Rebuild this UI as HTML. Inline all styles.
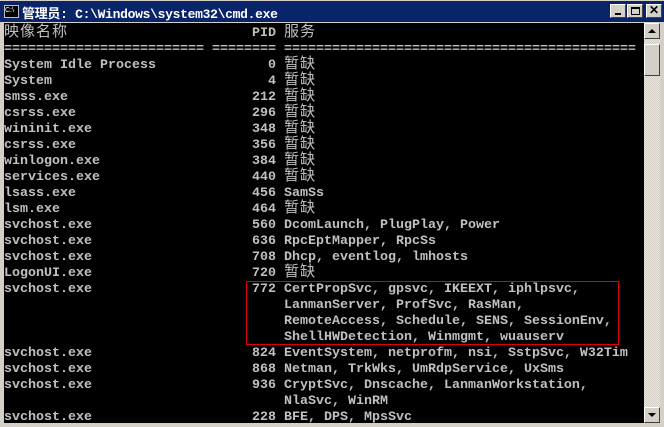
<!DOCTYPE html>
<html><head><meta charset="utf-8"><style>
*{margin:0;padding:0;box-sizing:border-box}
body{width:664px;height:427px;background:#d4d0c8;position:relative;overflow:hidden;font-family:"Liberation Mono","Noto Sans CJK SC",monospace}
#title{position:absolute;left:0;top:0;width:664px;height:22px;background:#0a246a;border-top:1px solid #d4d0c8}
#title .t{position:absolute;left:22px;top:2px;color:#fff;font-weight:bold;font-size:13px;font-family:"Liberation Mono","Noto Sans CJK SC",monospace;white-space:pre;letter-spacing:-0.3px}
#icon{position:absolute;left:4px;top:4px;width:15px;height:13px;background:#000;border:1px solid #c0c0c0;color:#fff;font-size:7px;line-height:10px;font-family:"Liberation Sans",sans-serif}
.btn{position:absolute;top:3px;width:16px;height:14px;background:#d4d0c8;border:1px solid;border-color:#fff #404040 #404040 #fff}
#con{position:absolute;left:4px;top:23px;width:640px;height:400px;background:#000;overflow:hidden}
#in{position:absolute;left:0;top:3px;width:640px;height:400px}
.r{position:absolute;left:0;height:16px;width:640px;color:#c0c0c0;font-size:13.33px;font-weight:bold;line-height:16px;white-space:pre}
.n{position:absolute;left:0}
.p{position:absolute;left:208px;width:64px;text-align:right}
.s{position:absolute;left:280px}
.c{font-weight:normal;font-size:15px;letter-spacing:1px;top:-1px}
#sb{position:absolute;left:644px;top:23px;width:16px;height:400px;background-color:#e8e6e2;background-image:linear-gradient(45deg,#d4d0c8 25%,transparent 25%,transparent 75%,#d4d0c8 75%),linear-gradient(45deg,#d4d0c8 25%,transparent 25%,transparent 75%,#d4d0c8 75%);background-size:2px 2px;background-position:0 0,1px 1px}
.sbtn{position:absolute;left:0;width:16px;height:16px;background:#d4d0c8;border:1px solid;border-color:#fff #404040 #404040 #fff}
#box{position:absolute;left:246px;top:281px;width:373px;height:64px;border:1px solid #e00000}
</style></head><body>
<div id="title"><div id="icon">C:\</div><div class="t">管理员: C:\Windows\system32\cmd.exe</div>
<div class="btn" style="left:610px"><div style="position:absolute;left:4px;top:8px;width:6px;height:2px;background:#000"></div></div>
<div class="btn" style="left:627px"><div style="position:absolute;left:3px;top:2px;width:9px;height:8px;border:1px solid #000;border-top-width:2px"></div></div>
<div class="btn" style="left:646px;font:bold 12px 'Liberation Sans',sans-serif;text-align:center;line-height:11px">✕</div>
</div>
<div id="con"><div id="in">
<div class="r" style="top:0"><span class="n c">映像名称</span><span class="p">PID</span><span class="s c">服务</span></div>
<div class="r" style="top:16px"><span class="n">=========================</span><span class="p">========</span><span class="s">============================================</span></div>
<div class="r" style="top:32px"><span class="n">System Idle Process</span><span class="p">0</span><span class="s c">暂缺</span></div>
<div class="r" style="top:48px"><span class="n">System</span><span class="p">4</span><span class="s c">暂缺</span></div>
<div class="r" style="top:64px"><span class="n">smss.exe</span><span class="p">212</span><span class="s c">暂缺</span></div>
<div class="r" style="top:80px"><span class="n">csrss.exe</span><span class="p">296</span><span class="s c">暂缺</span></div>
<div class="r" style="top:96px"><span class="n">wininit.exe</span><span class="p">348</span><span class="s c">暂缺</span></div>
<div class="r" style="top:112px"><span class="n">csrss.exe</span><span class="p">356</span><span class="s c">暂缺</span></div>
<div class="r" style="top:128px"><span class="n">winlogon.exe</span><span class="p">384</span><span class="s c">暂缺</span></div>
<div class="r" style="top:144px"><span class="n">services.exe</span><span class="p">440</span><span class="s c">暂缺</span></div>
<div class="r" style="top:160px"><span class="n">lsass.exe</span><span class="p">456</span><span class="s">SamSs</span></div>
<div class="r" style="top:176px"><span class="n">lsm.exe</span><span class="p">464</span><span class="s c">暂缺</span></div>
<div class="r" style="top:192px"><span class="n">svchost.exe</span><span class="p">560</span><span class="s">DcomLaunch, PlugPlay, Power</span></div>
<div class="r" style="top:208px"><span class="n">svchost.exe</span><span class="p">636</span><span class="s">RpcEptMapper, RpcSs</span></div>
<div class="r" style="top:224px"><span class="n">svchost.exe</span><span class="p">708</span><span class="s">Dhcp, eventlog, lmhosts</span></div>
<div class="r" style="top:240px"><span class="n">LogonUI.exe</span><span class="p">720</span><span class="s c">暂缺</span></div>
<div class="r" style="top:256px"><span class="n">svchost.exe</span><span class="p">772</span><span class="s">CertPropSvc, gpsvc, IKEEXT, iphlpsvc,</span></div>
<div class="r" style="top:272px"><span class="s">LanmanServer, ProfSvc, RasMan,</span></div>
<div class="r" style="top:288px"><span class="s">RemoteAccess, Schedule, SENS, SessionEnv,</span></div>
<div class="r" style="top:304px"><span class="s">ShellHWDetection, Winmgmt, wuauserv</span></div>
<div class="r" style="top:320px"><span class="n">svchost.exe</span><span class="p">824</span><span class="s">EventSystem, netprofm, nsi, SstpSvc, W32Tim</span></div>
<div class="r" style="top:336px"><span class="n">svchost.exe</span><span class="p">868</span><span class="s">Netman, TrkWks, UmRdpService, UxSms</span></div>
<div class="r" style="top:352px"><span class="n">svchost.exe</span><span class="p">936</span><span class="s">CryptSvc, Dnscache, LanmanWorkstation,</span></div>
<div class="r" style="top:368px"><span class="s">NlaSvc, WinRM</span></div>
<div class="r" style="top:384px"><span class="n">svchost.exe</span><span class="p">228</span><span class="s">BFE, DPS, MpsSvc</span></div>
</div></div>
<div id="box"></div>
<div id="sb">
<div class="sbtn" style="top:0"><div style="position:absolute;left:3px;top:5px;width:0;height:0;border-left:4px solid transparent;border-right:4px solid transparent;border-bottom:4px solid #000"></div></div>
<div class="sbtn" style="top:21px;height:32px"></div>
<div class="sbtn" style="top:384px"><div style="position:absolute;left:3px;top:5px;width:0;height:0;border-left:4px solid transparent;border-right:4px solid transparent;border-top:4px solid #000"></div></div>
</div>
</body></html>
